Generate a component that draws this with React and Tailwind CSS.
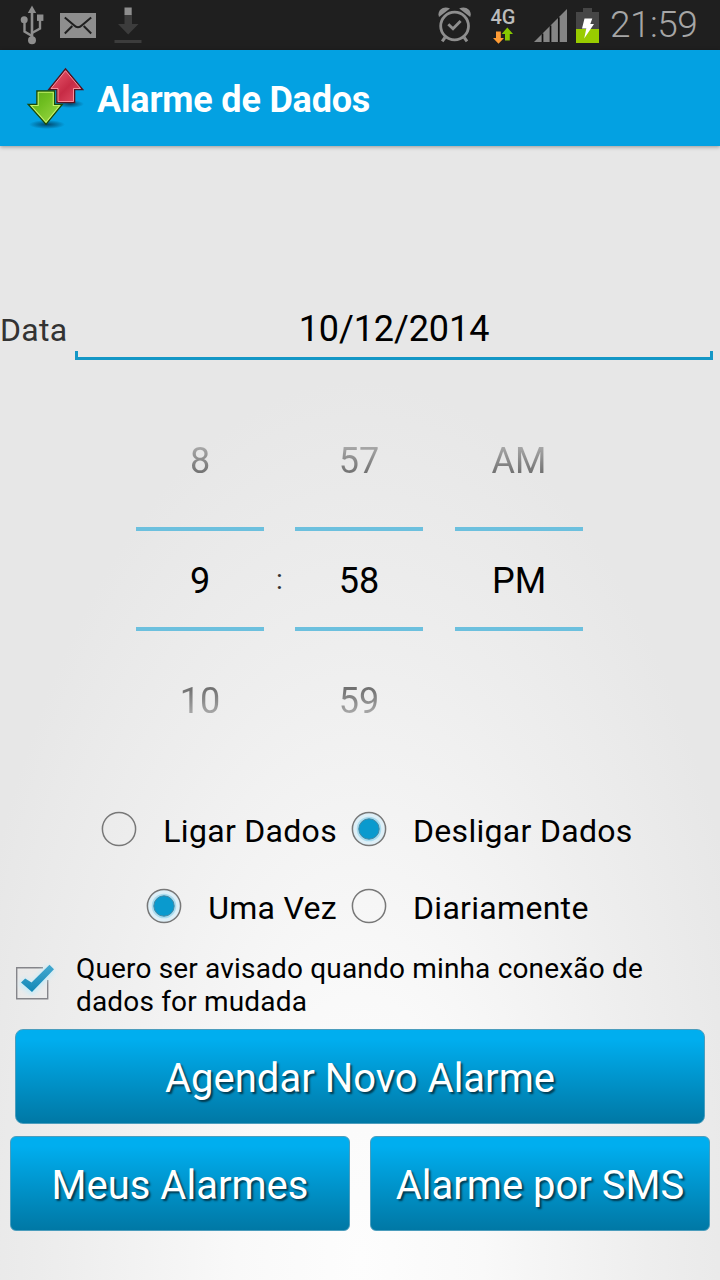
function UsbIcon() {
  return (
    <svg className="w-7 h-10" viewBox="0 0 28 40" fill="none">
      <path d="M14 6V36" stroke="#8e8e8e" strokeWidth="2.6" />
      <path d="M14 31L6.5 26.5V16" stroke="#8e8e8e" strokeWidth="2.4" />
      <path d="M14 28L22 23.5V14" stroke="#8e8e8e" strokeWidth="2.4" />
      <path d="M14 .5L18.2 8H9.8Z" fill="#8e8e8e" />
      <circle cx="6.2" cy="14.8" r="3.5" fill="#8e8e8e" />
      <rect x="19" y="9.5" width="6.4" height="6.4" fill="#8e8e8e" />
      <circle cx="14" cy="35.3" r="4" fill="#8e8e8e" />
    </svg>
  );
}

function MailIcon() {
  return (
    <svg className="w-9 h-[25px]" viewBox="0 0 36 25" fill="none">
      <rect width="36" height="25" fill="#8e8e8e" />
      <path
        d="M4.8 4.5L14 12.3Q18 16.2 22 12.3L31.2 4.5M4.8 20.5L12.3 13M31.2 20.5L23.7 13"
        stroke="#1f1f1f"
        strokeWidth="2"
      />
    </svg>
  );
}

function DownloadIcon() {
  return (
    <svg className="w-7 h-9" viewBox="0 0 28 36">
      <path d="M10.5 7.5H18V17H24.5L14.2 27.4L4 17H10.5Z" fill="#3c3c3c" />
      <rect x="10.5" y=".5" width="7.2" height="7.5" fill="#8e8e8e" />
      <rect x="0.5" y="33" width="27" height="3" fill="#3c3c3c" />
    </svg>
  );
}

function AlarmIcon() {
  return (
    <svg className="w-[34px] h-9" viewBox="0 0 34 36" fill="none">
      <circle cx="16.6" cy="19" r="13.9" stroke="#8e8e8e" strokeWidth="2.8" />
      <path d="M10.3 17.2L15 21.8L22.6 14" stroke="#8e8e8e" strokeWidth="2.8" />
      <path d="M1 10C-1.5 3.5 5.5-2.2 12 1.6Z" fill="#8e8e8e" />
      <path d="M32.2 10C34.7 3.5 27.7-2.2 21.2 1.6Z" fill="#8e8e8e" />
      <path d="M7 30.5L4.2 34.3M26.2 30.5L29 34.3" stroke="#8e8e8e" strokeWidth="3" />
    </svg>
  );
}

function DataArrows() {
  return (
    <svg className="w-5 h-[17px]" viewBox="0 0 20 17">
      <path d="M3 4.500H7.800V11H11L5.500 16.800L0 11H3Z" fill="#ff9c35" />
      <path d="M12 13.500H16.800V7H20L14.300 .5L8.700 7H12Z" fill="#86c800" />
    </svg>
  );
}

function SignalIcon() {
  return (
    <svg className="w-[34px] h-[33px]" viewBox="0 0 34 33">
      <path d="M0 33L33 0V33Z" fill="#858585" />
      <path d="M8.500 24.500V33M16.500 16.500V33M24.800 8.200V33" stroke="#111" strokeWidth="1.700" />
    </svg>
  );
}

function BatteryIcon() {
  return (
    <svg className="w-[23px] h-[35px]" viewBox="0 0 23 35">
      <path d="M7 0H16V4H23V21H0V4H7Z" fill="#464646" />
      <rect y="21" width="23" height="14" fill="#99cc00" />
      <path d="M8.500 10.500H16.300L14.300 16H18L8.200 30.500L10.300 20.500H6Z" fill="#fff" />
    </svg>
  );
}

function AppLogo() {
  return (
    <svg className="w-[60px] h-[64px]" viewBox="0 0 60 64">
      <defs>
        <linearGradient id="redArrow" x1="0" y1="0" x2="1" y2="1">
          <stop offset="0" stopColor="#ef6074" />
          <stop offset=".55" stopColor="#c72b45" />
          <stop offset="1" stopColor="#e4546a" />
        </linearGradient>
        <linearGradient id="greenArrow" x1="0" y1="0" x2="1" y2="1">
          <stop offset="0" stopColor="#58a81a" />
          <stop offset=".4" stopColor="#6fbe20" />
          <stop offset="1" stopColor="#a4dc4c" />
        </linearGradient>
        <radialGradient id="logoShadow">
          <stop offset="0" stopColor="#00223c" stopOpacity=".7" />
          <stop offset="1" stopColor="#00223c" stopOpacity="0" />
        </radialGradient>
      </defs>
      <ellipse cx="21" cy="58.500" rx="18" ry="4.500" fill="url(#logoShadow)" />
      <ellipse cx="44" cy="38" rx="14" ry="4" fill="url(#logoShadow)" />
      <path
        d="M39.500 3L56.500 23.500H48.500V36.500H31V23.500H23Z"
        fill="url(#redArrow)"
        stroke="#54121f"
        strokeWidth="1.600"
      />
      <path d="M39.500 4.700L54.500 22.500H47.500V35.500H32V22.500H25Z" fill="none" stroke="#ff9aa6" strokeWidth=".9" />
      <path
        d="M11 25H28.500V38.500H36L20 58L2.500 38.500H11Z"
        fill="url(#greenArrow)"
        stroke="#1b4a08"
        strokeWidth="1.600"
      />
      <path d="M12.200 26.200H27.300V39.500H33.700L20 56.300L5 39.500H12.200Z" fill="none" stroke="#c4f26a" strokeWidth="1.100" />
    </svg>
  );
}

function StatusBar() {
  return (
    <div className="h-[50px] shrink-0 bg-[#1f1f1f] flex items-center pl-[18px] pr-[21px]">
      <UsbIcon />
      <div className="ml-[14px]">
        <MailIcon />
      </div>
      <div className="ml-[18px]">
        <DownloadIcon />
      </div>

      <div className="ml-auto flex items-center">
        <AlarmIcon />
        <div className="ml-4 w-[30px] flex flex-col items-center">
          <span className="text-[20px] leading-[19px] pt-px font-medium text-[#bcbcbc]">4G</span>
          <DataArrows />
        </div>
        <div className="ml-[16px] flex">
          <SignalIcon />
        </div>
        <div className="ml-2 flex">
          <BatteryIcon />
        </div>
        <span className="ml-[11px] w-[89px] text-[37px] leading-[48px] tracking-[-0.5px] font-light text-[#a6a6a6] whitespace-nowrap">
          21:59
        </span>
      </div>
    </div>
  );
}

function PickerColumn({ prev, value, next }) {
  return (
    <div className="w-32 text-center text-[36px] text-black">
      <div className="h-[36px] leading-[36px] mt-px text-transparent bg-clip-text bg-linear-to-b from-[#b0b0b0] to-[#666]">
        {prev}
      </div>
      <div className="h-[104px] leading-[100px] border-y-4 border-[#6cc0de] mt-[48px]">{value}</div>
      <div className="h-[36px] leading-[36px] mt-[52px] text-transparent bg-clip-text bg-linear-to-b from-[#666] to-[#b4b4b4]">
        {next}
      </div>
    </div>
  );
}

function Radio({ label, checked }) {
  return (
    <div className="flex items-center">
      <svg className="w-9 h-9 mb-1" viewBox="0 0 36 36">
        <circle cx="18" cy="18" r="16.600" fill={checked ? "#deeff7" : "none"} stroke="#787878" strokeWidth="1.500" />
        {checked && <circle cx="18" cy="18" r="12.300" fill="#a9dcef" />}
        {checked && <circle cx="18" cy="18" r="10.200" fill="#0a9ace" stroke="#4387a3" strokeWidth="1" />}
      </svg>
      <span className="ml-[26px] text-[32px] leading-[40px] tracking-[0.3px] text-black whitespace-nowrap">{label}</span>
    </div>
  );
}

function Checkbox() {
  return (
    <svg className="w-11 h-11" viewBox="0 0 44 44">
      <defs>
        <filter id="glow" x="-30%" y="-30%" width="160%" height="160%">
          <feGaussianBlur stdDeviation="2.500" />
        </filter>
        <linearGradient id="tick" x1="0" y1="0" x2="0" y2="1">
          <stop offset="0" stopColor="#45a9d0" />
          <stop offset="1" stopColor="#1187b6" />
        </linearGradient>
      </defs>
      <path d="M35.700 22V40.700H4.700V9.700H31" fill="none" stroke="#85858a" strokeWidth="1.400" />
      <path d="M10 23L19.500 31L39 10" fill="none" stroke="#c2ebf9" strokeWidth="9" filter="url(#glow)" />
      <path d="M9 24.500L13.200 20.500L19.500 24.500L37.500 6.800L42 11.200L20 34Z" fill="url(#tick)" />
    </svg>
  );
}

function BlueButton({ children, className }) {
  return (
    <button
      className={`h-[95px] border border-[#4b9dbd] bg-linear-to-b from-[#00aeef] from-10% to-[#0078a5] text-white text-[40px] leading-[48px] text-shadow-[2px_2px_2px_rgb(0_0_0/0.6)] whitespace-nowrap ${className}`}
    >
      {children}
    </button>
  );
}

export default function App() {
  return (
    <div className="w-[720px] h-[1280px] overflow-hidden flex flex-col font-[Roboto,sans-serif] bg-[radial-gradient(ellipse_410px_880px_at_360px_1260px,#fdfdfd_0%,#f9f9f9_30%,#eeeeee_70%,#e7e7e7_100%)]">
      <StatusBar />

      {/* ACTION BAR */}
      <div className="h-24 shrink-0 bg-[#03a1e2] flex items-center pl-[26px] shadow-[0_1px_4px_rgb(0_0_0/0.35)]">
        <AppLogo />
        <h1 className="ml-[11px] pt-1 text-[36px] font-bold tracking-[-0.2px] text-white whitespace-nowrap">
          Alarme de Dados
        </h1>
      </div>

      {/* DATE */}
      <div className="mt-[154px] h-[60px] flex pr-[7px]">
        <span className="w-[75px] text-[32px] leading-[60px] tracking-[0.3px] text-[#333]">Data</span>
        <div className="flex-1 flex flex-col">
          <div className="h-[51px] leading-[58px] text-center text-[36px] tracking-[-0.1px] text-black">10/12/2014</div>
          <div className="h-[9px] border-3 border-t-0 border-[#1497c6]" />
        </div>
      </div>

      {/* TIME */}
      <div className="mt-[82px] h-[289px] flex pl-[136px]">
        <PickerColumn prev="8" value="9" next="10" />
        <div className="w-[31px] pt-[120px] text-center text-[28px] leading-[36px] text-[#333]">:</div>
        <PickerColumn prev="57" value="58" next="59" />
        <div className="w-8" />
        <PickerColumn prev="AM" value="PM" />
      </div>

      {/* OPTIONS */}
      <div className="mt-[80px] h-10 flex">
        <div className="w-[337px] flex justify-end">
          <Radio label="Ligar Dados" />
        </div>
        <div className="ml-[14px]">
          <Radio label="Desligar Dados" checked />
        </div>
      </div>
      <div className="mt-[37px] h-10 flex">
        <div className="w-[337px] flex justify-end">
          <Radio label="Uma Vez" checked />
        </div>
        <div className="ml-[14px]">
          <Radio label="Diariamente" />
        </div>
      </div>

      <div className="mt-6 h-[66px] flex pl-3">
        <div className="pt-[6px]">
          <Checkbox />
        </div>
        <p className="ml-5 w-[600px] text-[28px] leading-[33px] tracking-[0.17px] text-black">
          Quero ser avisado quando minha conexão de
          <br />
          dados for mudada
        </p>
      </div>

      {/* ACTIONS */}
      <div className="mt-[11px] px-[15px] flex">
        <BlueButton className="flex-1 rounded-lg pt-1">Agendar Novo Alarme</BlueButton>
      </div>
      <div className="mt-3 px-[10px] grid grid-cols-2 gap-5">
        <BlueButton className="rounded-md pt-[5px]">Meus Alarmes</BlueButton>
        <BlueButton className="rounded-md pt-[5px]">Alarme por SMS</BlueButton>
      </div>
    </div>
  );
}
